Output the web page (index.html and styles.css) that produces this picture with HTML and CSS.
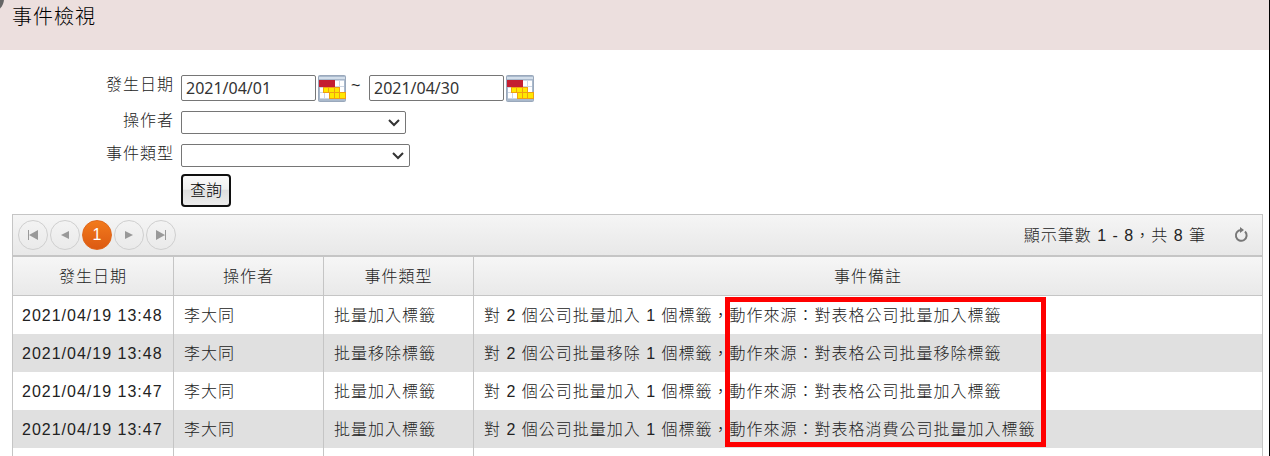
FILE: index.html
```html
<!DOCTYPE html>
<html lang="zh-Hant">
<head>
  <meta charset="UTF-8" />
  <meta name="viewport" content="width=device-width, initial-scale=1">
  <title>事件檢視</title>
  <link rel="stylesheet" href="styles.css">
</head>
<body>
  <svg class="hidden" aria-hidden="true">
    <symbol id="calendar" viewBox="0 0 28 27">
      <rect x="0.5" y="0.5" width="27" height="26" rx="1" fill="#a9b9cc" stroke="#9aa8bb"/>
      <rect x="1" y="2" width="26" height="2" fill="#d3deea"/>
      <rect x="2" y="5" width="24" height="19" fill="#cdd6e4"/>
      <path d="M17 6h4v5h-4zM22 6h4v5h-4zM2 13h3v4H2zM22 12h4v5h-4zM2 18h4v5H2zM7 18h4v5H7z" fill="#fff"/>
      <rect x="1" y="5" width="16" height="7" fill="#c41e30"/>
      <path d="M5 12h17v5h6v7H11v-6H5z" fill="#f0a011"/>
      <path d="M6 13h4v4H6zM11 13h5v4h-5zM17 13h4v4h-4zM12 18h4v5h-4zM17 18h4v5h-4zM22 18h5v5h-5z" fill="#ffe800"/>
    </symbol>
  </svg>

  <header class="page-header">
    <span class="corner"></span>
    <h1>事件檢視</h1>
  </header>

  <form class="search" onsubmit="return false">
    <label for="date-from">發生日期</label>
    <div class="dates">
      <input id="date-from" type="text" value="2021/04/01">
      <button type="button" class="cal" aria-label="選擇開始日期"><svg><use href="#calendar"/></svg></button>
      <span class="tilde">~</span>
      <input id="date-to" type="text" value="2021/04/30" aria-label="結束日期">
      <button type="button" class="cal" aria-label="選擇結束日期"><svg><use href="#calendar"/></svg></button>
    </div>
    <label for="operator">操作者</label>
    <div class="select operator">
      <select id="operator"><option></option></select>
      <svg viewBox="0 0 12 8"><path d="M1 1l5 5 5-5"/></svg>
    </div>
    <label for="event-type">事件類型</label>
    <div class="select event-type">
      <select id="event-type"><option></option></select>
      <svg viewBox="0 0 12 8"><path d="M1 1l5 5 5-5"/></svg>
    </div>
    <button type="submit" class="query">查詢</button>
  </form>

  <main class="grid">
    <div class="pager">
      <button type="button" aria-label="第一頁"><svg viewBox="0 0 10 10"><path d="M0 0h1v10H0zM10 0v10L1 5z"/></svg></button>
      <button type="button" aria-label="上一頁"><svg viewBox="0 0 10 10"><path d="M9 1v8L1 5z"/></svg></button>
      <button type="button" class="current">1</button>
      <button type="button" aria-label="下一頁"><svg viewBox="0 0 10 10"><path d="M1 1v8l8-4z"/></svg></button>
      <button type="button" aria-label="最後一頁"><svg viewBox="0 0 10 10"><path d="M9 0h1v10H9zM0 0v10l9-5z"/></svg></button>
      <span class="info">顯示筆數 1 - 8，共 8 筆</span>
      <button type="button" class="refresh" aria-label="重新整理"><svg viewBox="0 0 14 16"><path d="M7 3a5.4 5.4 0 1 0 4 1.500" fill="none" stroke="#777" stroke-width="2"/><path d="M6 0l4 3-4 3z" fill="#777"/></svg></button>
    </div>
    <div class="table-wrap">
      <table>
        <colgroup><col class="c-date"><col class="c-user"><col class="c-type"><col></colgroup>
        <thead>
          <tr><th>發生日期</th><th>操作者</th><th>事件類型</th><th>事件備註</th></tr>
        </thead>
        <tbody>
          <tr><td>2021/04/19 13:48</td><td>李大同</td><td>批量加入標籤</td><td>對 2 個公司批量加入 1 個標籤，動作來源：對表格公司批量加入標籤</td></tr>
          <tr><td>2021/04/19 13:48</td><td>李大同</td><td>批量移除標籤</td><td>對 2 個公司批量移除 1 個標籤，動作來源：對表格公司批量移除標籤</td></tr>
          <tr><td>2021/04/19 13:47</td><td>李大同</td><td>批量加入標籤</td><td>對 2 個公司批量加入 1 個標籤，動作來源：對表格公司批量加入標籤</td></tr>
          <tr><td>2021/04/19 13:47</td><td>李大同</td><td>批量加入標籤</td><td>對 2 個公司批量加入 1 個標籤，動作來源：對表格消費公司批量加入標籤</td></tr>
          <tr><td></td><td></td><td></td><td></td></tr>
        </tbody>
      </table>
      <div class="highlight"></div>
    </div>
  </main>
</body>
</html>
```

FILE: styles.css
```css
* {
  box-sizing: border-box;
}
body {
  height: 100vh;
  margin: 0;
  overflow: hidden;
  border-right: 1px solid #000;
  background: #fff;
  color: #222;
  font-family: "Liberation Sans", "Noto Sans CJK TC", sans-serif;
  font-size: 16px;
  font-weight: 300;
  line-height: 20px;
  letter-spacing: 1px;
}
button, input, select {
  margin: 0;
  font: inherit;
  letter-spacing: inherit;
}
.hidden {
  display: none;
}

.page-header {
  position: relative;
  height: 50px;
  padding: 5px 12px;
  background: #ecdfde;
}
.page-header h1 {
  margin: 0;
  color: #000;
  font-size: 20px;
  font-weight: 300;
  line-height: 24px;
}
.corner {
  position: absolute;
  left: -22px;
  top: -14px;
  width: 26px;
  height: 26px;
  border-radius: 50%;
  background: #666;
}

/* search form */
.search {
  display: grid;
  grid-template-columns: 174px 1fr;
  column-gap: 7px;
  padding: 25px 0 7px;
}
.search label {
  text-align: right;
}
.dates {
  display: flex;
  align-items: center;
  height: 26px;
  margin-bottom: 10px;
}
.dates input {
  width: 135px;
  height: 26px;
  padding: 0 4px;
  border: 1px solid #767676;
  border-radius: 2px;
  background: #fff;
  color: #333;
  font-family: "Noto Sans", sans-serif;
  font-weight: 400;
  letter-spacing: 0;
}
.cal {
  width: 28px;
  height: 27px;
  margin-left: 2px;
  padding: 0;
  border: 0;
  background: none;
}
.cal svg {
  display: block;
  width: 28px;
  height: 27px;
}
.tilde {
  width: 23px;
  padding: 0 0 4px 5px;
}
.select {
  position: relative;
  height: 23px;
  margin-bottom: 10px;
}
.operator {
  width: 225px;
}
.event-type {
  width: 229px;
  margin-bottom: 7px;
}
.select select {
  display: block;
  width: 100%;
  height: 23px;
  border: 1px solid #767676;
  border-radius: 2px;
  background: #fff;
  appearance: none;
}
.select svg {
  position: absolute;
  right: 6px;
  top: 8px;
  width: 12px;
  height: 8px;
  fill: none;
  stroke: #333;
  stroke-width: 2;
  pointer-events: none;
}
.query {
  grid-column: 2;
  justify-self: start;
  width: 50px;
  height: 33px;
  padding: 0;
  border: 2px solid #101010;
  border-radius: 4px;
  background: linear-gradient(#fafafa, #f0f0f0 45%, #dedede 50%, #ececec);
  color: #000;
  letter-spacing: 0;
}

/* event list */
.grid {
  margin: 0 6px 0 12px;
  border: 1px solid #c5c5c5;
}
.pager {
  display: flex;
  align-items: center;
  gap: 2px;
  height: 42px;
  padding: 0 14px 0 5px;
  border-bottom: 2px solid #c5c5c5;
  background: linear-gradient(#f5f5f5, #e8e8e8);
}
.pager button {
  display: flex;
  align-items: center;
  justify-content: center;
  width: 30px;
  height: 30px;
  padding: 0;
  border: 1px solid #cfcfcf;
  border-radius: 50%;
  background: transparent;
}
.pager button svg {
  width: 10px;
  height: 10px;
  fill: #999;
}
.pager .current {
  border-color: #e0671b;
  background: linear-gradient(#f27a1c, #dc5a12);
  color: #fff;
  font-weight: 400;
  letter-spacing: 0;
}
.info {
  margin-left: auto;
  padding-top: 2px;
}
.pager .refresh {
  width: 14px;
  margin-left: 26px;
  border: 0;
}
.pager .refresh svg {
  flex: none;
  width: 14px;
  height: 16px;
}
.table-wrap {
  position: relative;
}
table {
  width: 100%;
  table-layout: fixed;
  border-collapse: separate;
  border-spacing: 0;
}
.c-date {
  width: 161px;
}
.c-user, .c-type {
  width: 150px;
}
th, td {
  height: 38px;
  padding: 2px 10px 0;
  border-right: 1px solid #c5c5c5;
  white-space: nowrap;
}
th:last-child, td:last-child {
  border-right: 0;
}
td:first-child {
  padding-left: 9px;
  padding-right: 9px;
}
th {
  height: 39px;
  border-bottom: 1px solid #c5c5c5;
  background: linear-gradient(#f6f6f6, #e9e9e9);
  font-weight: 300;
}
tbody tr:nth-child(even) {
  background: #e0e0e0;
}
.highlight {
  position: absolute;
  left: 712px;
  top: 40px;
  width: 321px;
  height: 150px;
  border: 5px solid #f00;
}
```
